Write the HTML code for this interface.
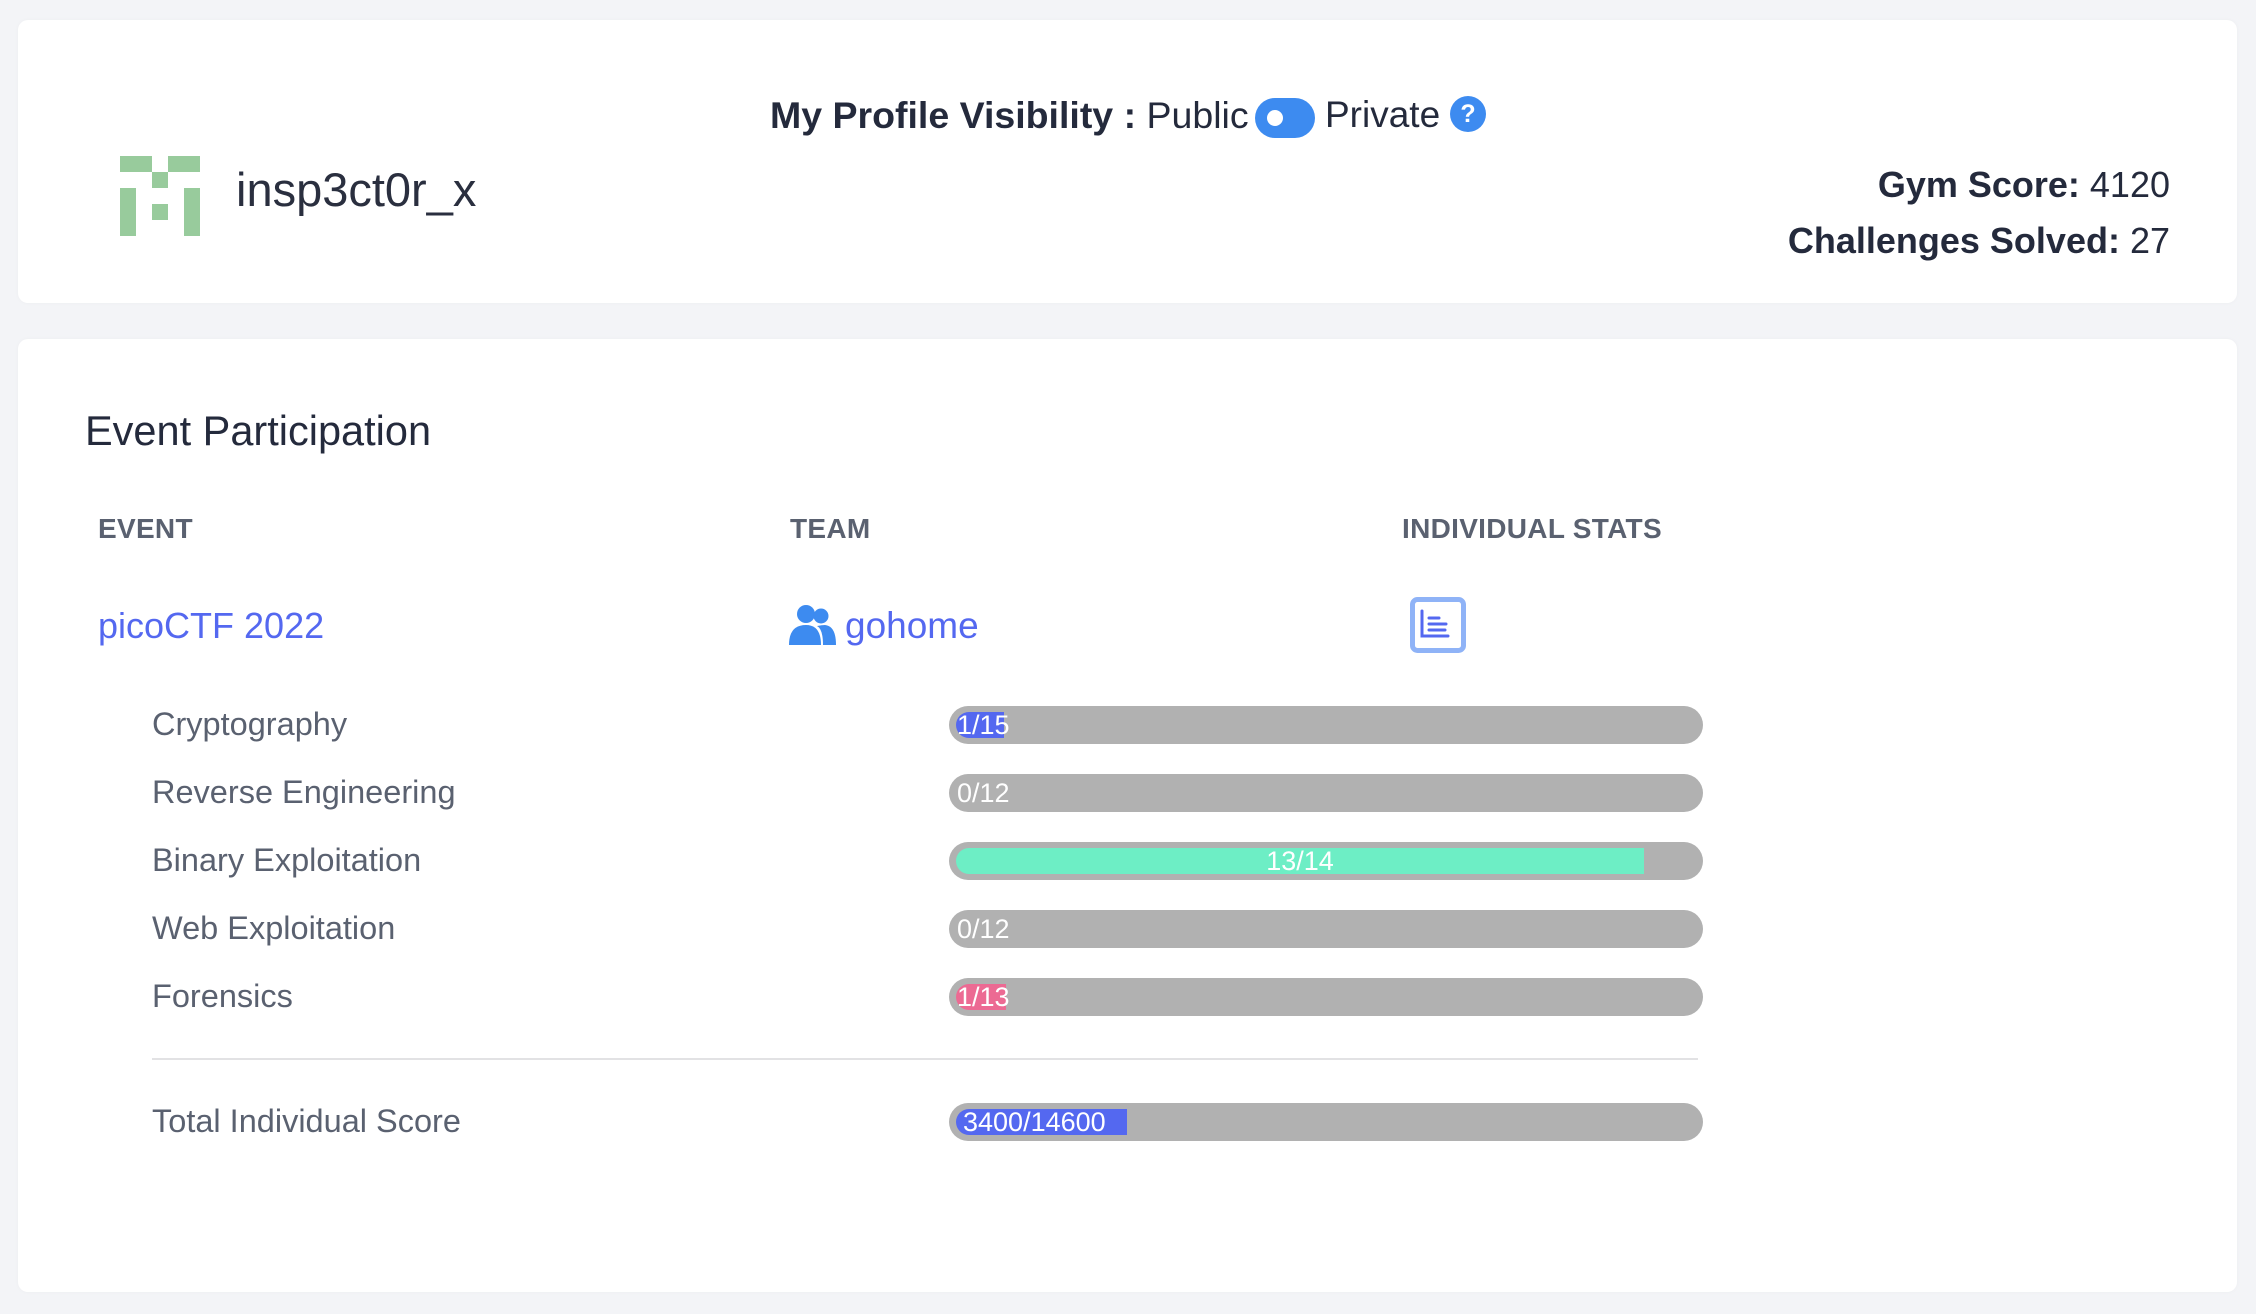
<!DOCTYPE html>
<html><head><meta charset="utf-8"><style>
*{margin:0;padding:0;box-sizing:border-box}
body{width:2256px;height:1314px;background:#f3f4f7;font-family:"Liberation Sans",sans-serif;color:#242a3c;position:relative;overflow:hidden}
.card{position:absolute;background:#fff;border-radius:10px;box-shadow:0 0 4px rgba(0,0,0,0.03)}
.abs{position:absolute;white-space:nowrap}
.lg{position:absolute;background:#98cb9c}
.hdr{font-size:28px;font-weight:bold;color:#5a6170;letter-spacing:0.3px}
.lbl{font-size:32.5px;color:#5a6170;left:152px}
.bar{position:absolute;left:949px;width:754px;height:38px;background:#b1b1b1;border-radius:19px}
.fill{position:absolute;left:7px;top:6px;height:26px;border-radius:13px 0 0 13px}
.bt{position:absolute;left:8px;top:2px;font-size:27px;color:#fff;line-height:34px}
</style></head><body>
<div class="card" style="left:18px;top:20px;width:2219px;height:283px"></div>
<div class="card" style="left:18px;top:339px;width:2219px;height:953px"></div>

<div class="lg" style="left:120px;top:156px;width:32px;height:16px"></div>
<div class="lg" style="left:168px;top:156px;width:32px;height:16px"></div>
<div class="lg" style="left:152px;top:172px;width:16px;height:16px"></div>
<div class="lg" style="left:120px;top:188px;width:16px;height:48px"></div>
<div class="lg" style="left:184px;top:188px;width:16px;height:48px"></div>
<div class="lg" style="left:152px;top:204px;width:16px;height:16px"></div>

<div class="abs" style="left:236px;top:162px;font-size:47px;line-height:56px;font-weight:300;color:#2a2f3f">insp3ct0r_x</div>

<div class="abs" style="left:770px;top:93px;font-size:37.5px;line-height:44px"><b>My Profile Visibility :</b> Public</div>
<div class="abs" style="left:1255px;top:98px;width:60px;height:40px;border-radius:20px;background:#3d8bf0"><div style="position:absolute;left:12px;top:12px;width:16px;height:16px;border-radius:50%;background:#fff"></div></div>
<div class="abs" style="left:1325px;top:93px;font-size:37px;line-height:44px">Private</div>
<div class="abs" style="left:1450px;top:96px;width:36px;height:36px;border-radius:50%;background:#3d8bf0;color:#fff;font-size:25px;font-weight:bold;text-align:center;line-height:36px">?</div>

<div class="abs" style="right:86px;top:163px;font-size:36px;line-height:44px"><b>Gym Score:</b> 4120</div>
<div class="abs" style="right:86px;top:219px;font-size:36px;line-height:44px"><b>Challenges Solved:</b> 27</div>

<div class="abs" style="left:85px;top:406px;font-size:41.5px;line-height:50px">Event Participation</div>
<div class="abs hdr" style="left:98px;top:513px">EVENT</div>
<div class="abs hdr" style="left:790px;top:513px">TEAM</div>
<div class="abs hdr" style="left:1402px;top:513px">INDIVIDUAL STATS</div>

<div class="abs" style="left:98px;top:602px;font-size:36px;line-height:48px;color:#5468f0">picoCTF 2022</div>
<svg class="abs" style="left:789px;top:605px" width="48" height="40" viewBox="0 0 48 40">
<circle cx="17" cy="9" r="9" fill="#3d8bf0"/><circle cx="32" cy="11" r="7.5" fill="#3d8bf0"/>
<path d="M0 40 Q0 20 17 20 Q32 20 32 40Z" fill="#3d8bf0"/><path d="M34 40 Q34 24 28 21 Q33 20 36 20 Q47 21 47 40Z" fill="#3d8bf0"/></svg>
<div class="abs" style="left:845px;top:602px;font-size:37px;line-height:48px;color:#5468f0">gohome</div>
<svg class="abs" style="left:1410px;top:597px" width="56" height="56" viewBox="0 0 56 56">
<rect x="2.5" y="2.5" width="51" height="51" rx="5" fill="#fff" stroke="#8fb3f7" stroke-width="5"/>
<path d="M12 14V39H38M19 21H29M19 27H36M19 33H35" stroke="#5468f0" stroke-width="3" fill="none" stroke-linecap="round"/></svg>

<div class="abs lbl" style="top:706px">Cryptography</div>
<div class="bar" style="top:706px"><div class="fill" style="width:48px;background:#5468f0"></div><div class="bt">1/15</div></div>
<div class="abs lbl" style="top:774px">Reverse Engineering</div>
<div class="bar" style="top:774px"><div class="bt">0/12</div></div>
<div class="abs lbl" style="top:842px">Binary Exploitation</div>
<div class="bar" style="top:842px"><div class="fill" style="width:688px;background:#6deec5"></div><div class="bt" style="left:0;width:688px;text-align:center;padding-left:14px">13/14</div></div>
<div class="abs lbl" style="top:910px">Web Exploitation</div>
<div class="bar" style="top:910px"><div class="bt">0/12</div></div>
<div class="abs lbl" style="top:978px">Forensics</div>
<div class="bar" style="top:978px"><div class="fill" style="width:50px;background:#ec6a93"></div><div class="bt">1/13</div></div>

<div class="abs" style="left:152px;top:1058px;width:1546px;height:2px;background:#e2e2e4"></div>

<div class="abs lbl" style="top:1103px">Total Individual Score</div>
<div class="bar" style="top:1103px"><div class="fill" style="width:171px;background:#5468f0"></div><div class="bt" style="left:14px">3400/14600</div></div>
</body></html>
